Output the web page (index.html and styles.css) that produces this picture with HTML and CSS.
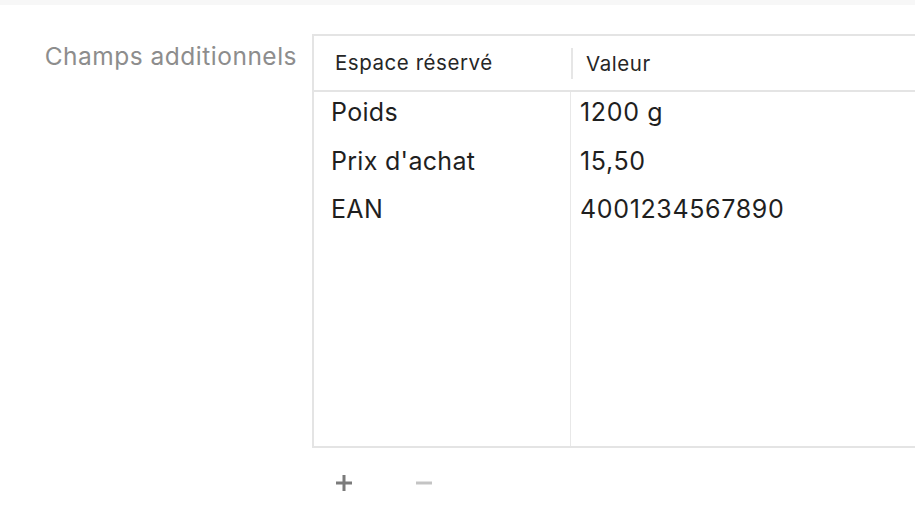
FILE: index.html
```html
<!DOCTYPE html>
<html lang="fr">
<head>
<meta charset="utf-8">
<title>Champs additionnels</title>
<link rel="stylesheet" href="styles.css">
</head>
<body>
<div class="topbar"></div>
<div class="field">
  <div class="label">Champs additionnels</div>
  <div class="control">
    <div class="table">
      <div class="thead">
        <div class="th th-key">Espace réservé</div>
        <div class="th th-val">Valeur</div>
      </div>
      <div class="tbody">
        <div class="col col-key">
          <div class="cell">Poids</div>
          <div class="cell">Prix d'achat</div>
          <div class="cell">EAN</div>
        </div>
        <div class="col col-val">
          <div class="cell">1200 g</div>
          <div class="cell">15,50</div>
          <div class="cell">4001234567890</div>
        </div>
      </div>
    </div>
    <div class="buttons">
      <button class="btn btn-add" aria-label="Ajouter">
        <svg width="16" height="16" viewBox="0 0 16 16"><path d="M8 0V16M0 8H16" stroke="#7b7b7b" stroke-width="3" fill="none"/></svg>
      </button>
      <button class="btn btn-remove" aria-label="Supprimer">
        <svg width="16" height="16" viewBox="0 0 16 16"><path d="M0 8H16" stroke="#c4c4c4" stroke-width="3" fill="none"/></svg>
      </button>
    </div>
  </div>
</div>
</body>
</html>
```
FILE: styles.css
```css
html, body {
  margin: 0;
  padding: 0;
  background: #ffffff;
  font-family: Inter, "Liberation Sans", Arial, sans-serif;
  overflow: hidden;
}
.topbar {
  height: 5px;
  background: #f7f7f7;
}
.field {
  display: flex;
  padding-top: 29px;
}
.label {
  flex: 0 0 297px;
  padding-right: 15px;
  text-align: right;
  color: #8d8d8d;
  font-size: 24.5px;
  letter-spacing: 0.5px;
  line-height: 28px;
  padding-top: 8px;
  white-space: nowrap;
}
.control {
  flex: 1;
  min-width: 0;
  overflow: hidden;
  display: flex;
  flex-direction: column;
}
.table {
  border: 2px solid #e4e4e4;
  border-right: none;
  width: 640px;
}
.thead {
  display: flex;
  align-items: center;
  height: 54px;
  border-bottom: 2px solid #e4e4e4;
}
.th {
  font-size: 20.5px;
  letter-spacing: 0.55px;
  color: #262626;
  line-height: 28px;
}
.th-key {
  width: 257px;
  box-sizing: border-box;
  padding-left: 21px;
}
.th-val {
  padding-left: 13px;
  border-left: 2px solid #e6e6e6;
  height: 31px;
  line-height: 31px;
}
.tbody {
  display: flex;
  height: 354px;
}
.col-key {
  width: 257px;
  box-sizing: border-box;
  padding-left: 17px;
  border-right: 1px solid #e8e8e8;
}
.col-val {
  padding-left: 9px;
}
.col-val .cell {
  letter-spacing: 0.65px;
}
.cell {
  height: 48.5px;
  box-sizing: border-box;
  padding-top: 6px;
  line-height: 28px;
  font-size: 25px;
  letter-spacing: 0.3px;
  color: #1f1f1f;
}
.buttons {
  display: flex;
  gap: 64px;
  padding-left: 24px;
  padding-top: 27px;
}
.btn {
  border: none;
  background: none;
  padding: 0;
  width: 16px;
  height: 16px;
  display: block;
}
.btn svg {
  display: block;
}
```
